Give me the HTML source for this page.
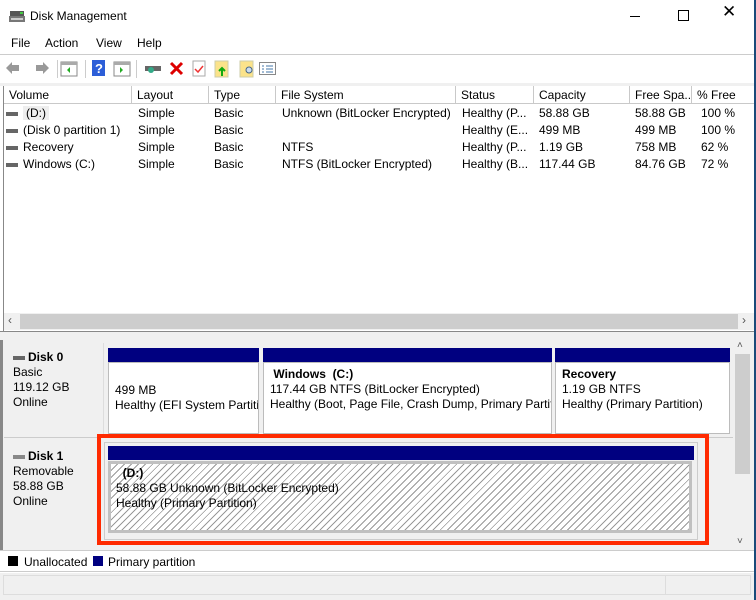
<!DOCTYPE html>
<html><head><style>
*{margin:0;padding:0;box-sizing:border-box}
body{width:756px;height:600px;background:#fff;font-family:"Liberation Sans",sans-serif;font-size:12px;color:#000;position:relative;overflow:hidden}
.a{position:absolute;white-space:nowrap}
.hdr{position:absolute;top:86px;height:18px;background:#fff;border-right:1px solid #c9c9c9;border-bottom:1px solid #c9c9c9;padding:2px 0 0 5px;white-space:nowrap}
.row{position:absolute;left:4px;width:750px;height:17px;line-height:17px;white-space:nowrap}
.row>span{position:absolute;white-space:nowrap}
.dk{display:inline-block;width:12px;height:4px;background:#666;vertical-align:middle;margin-right:5px}
.bar{position:absolute;height:14px;background:#000080}
.box{position:absolute;background:#fff;border:1px solid #bcbcbc;padding:4px 0 0 6px;line-height:15px;overflow:hidden;white-space:nowrap}
.hatch{background:repeating-linear-gradient(135deg,#fff 0 4px,#999 4px 5px)}
</style></head><body>
<svg class="a" style="left:9px;top:9px" width="16" height="14"><rect x="1" y="2" width="14" height="5" fill="#555"/><rect x="0" y="7" width="16" height="6" fill="#777"/><rect x="11" y="3" width="3" height="2" fill="#4c4"/><rect x="2" y="9" width="12" height="2" fill="#ccc"/></svg>
<div class="a" style="left:30px;top:9px;font-size:12px">Disk Management</div>
<div class="a" style="left:630px;top:16px;width:10px;height:1px;background:#000"></div>
<div class="a" style="left:678px;top:10px;width:11px;height:11px;border:1px solid #000"></div>
<div class="a" style="left:722px;top:2px;font-size:17px">✕</div>
<div class="a" style="left:754px;top:0;width:2px;height:600px;background:#1a4b7a"></div>
<div class="a" style="left:11px;top:36px">File</div>
<div class="a" style="left:45px;top:36px">Action</div>
<div class="a" style="left:96px;top:36px">View</div>
<div class="a" style="left:137px;top:36px">Help</div>
<div class="a" style="left:0;top:54px;width:754px;height:1px;background:#ccc"></div>
<div class="a" style="left:0;top:55px;width:754px;height:28px;background:#fff"></div>
<svg class="a" style="left:5px;top:60px" width="260" height="18">
<path d="M1 8 L7 2 V5 H14 V11 H7 V14Z" fill="#999"/>
<path d="M44 8 L38 2 V5 H31 V11 H38 V14Z" fill="#999"/>
<rect x="52" y="0" width="1" height="18" fill="#ccc"/>
<rect x="56" y="2" width="16" height="14" fill="#fff" stroke="#888"/><rect x="56" y="2" width="16" height="3" fill="#aaa"/><path d="M62 10 l3 -3 v6z" fill="#2a2"/>
<rect x="80" y="0" width="1" height="18" fill="#ccc"/>
<rect x="87" y="0" width="13" height="16" fill="#2c5ed8"/><text x="90" y="13" fill="#fff" font-size="13" font-weight="bold">?</text>
<rect x="109" y="2" width="16" height="14" fill="#fff" stroke="#888"/><rect x="109" y="2" width="16" height="3" fill="#aaa"/><path d="M115 7 l3 3 -3 3z" fill="#2a2"/>
<rect x="131" y="0" width="1" height="18" fill="#ccc"/>
<rect x="140" y="6" width="16" height="5" fill="#666"/><circle cx="146" cy="10" r="3" fill="#3a8" />
<path d="M166 3 L177 14 M177 3 L166 14" stroke="#d00" stroke-width="3"/>
<rect x="188" y="1" width="12" height="15" fill="#fff" stroke="#aaa"/><path d="M190 9 l3 3 5 -6" stroke="#e33" fill="none" stroke-width="1.5"/>
<rect x="210" y="1" width="13" height="16" fill="#fbe38a" stroke="#cca"/><path d="M217 8 v8 M214 11 l3 -3 3 3" stroke="#1a1" stroke-width="2" fill="none"/>
<rect x="235" y="1" width="13" height="16" fill="#fbe38a" stroke="#cca"/><circle cx="244" cy="10" r="3" fill="#cde" stroke="#468"/>
</svg>
<svg class="a" style="left:259px;top:62px" width="18" height="14"><rect x="0.5" y="0.5" width="16" height="12" fill="#fff" stroke="#888"/><path d="M3 4h2M7 4h7M3 7h2M7 7h7M3 10h2M7 10h7" stroke="#47a"/></svg>
<div class="a" style="left:0;top:83px;width:754px;height:3px;background:#f0f0f0"></div>
<div class="a" style="left:3px;top:86px;width:751px;height:245px;border-left:1px solid #888"></div>
<div class="hdr" style="left:4px;width:128px">Volume</div>
<div class="hdr" style="left:132px;width:77px">Layout</div>
<div class="hdr" style="left:209px;width:67px">Type</div>
<div class="hdr" style="left:276px;width:180px">File System</div>
<div class="hdr" style="left:456px;width:78px">Status</div>
<div class="hdr" style="left:534px;width:96px">Capacity</div>
<div class="hdr" style="left:630px;width:62px">Free Spa...</div>
<div class="hdr" style="left:692px;width:62px;border-right:none">% Free</div>
<div class="row" style="top:105px"><span style="left:2px"><i class="dk"></i><b style="font-weight:normal;background:#eee;padding:0 3px">(D:)</b></span><span style="left:134px">Simple</span><span style="left:210px">Basic</span><span style="left:278px">Unknown (BitLocker Encrypted)</span><span style="left:458px">Healthy (P...</span><span style="left:535px">58.88 GB</span><span style="left:631px">58.88 GB</span><span style="left:697px">100 %</span></div>
<div class="row" style="top:122px"><span style="left:2px"><i class="dk"></i>(Disk 0 partition 1)</span><span style="left:134px">Simple</span><span style="left:210px">Basic</span><span style="left:458px">Healthy (E...</span><span style="left:535px">499 MB</span><span style="left:631px">499 MB</span><span style="left:697px">100 %</span></div>
<div class="row" style="top:139px"><span style="left:2px"><i class="dk"></i>Recovery</span><span style="left:134px">Simple</span><span style="left:210px">Basic</span><span style="left:278px">NTFS</span><span style="left:458px">Healthy (P...</span><span style="left:535px">1.19 GB</span><span style="left:631px">758 MB</span><span style="left:697px">62 %</span></div>
<div class="row" style="top:156px"><span style="left:2px"><i class="dk"></i>Windows (C:)</span><span style="left:134px">Simple</span><span style="left:210px">Basic</span><span style="left:278px">NTFS (BitLocker Encrypted)</span><span style="left:458px">Healthy (B...</span><span style="left:535px">117.44 GB</span><span style="left:631px">84.76 GB</span><span style="left:697px">72 %</span></div>
<div class="a" style="left:4px;top:313px;width:750px;height:17px;background:#f0f0f0"></div>
<div class="a" style="left:20px;top:314px;width:718px;height:15px;background:#cdcdcd"></div>
<div class="a" style="left:8px;top:313px;color:#555">‹</div>
<div class="a" style="left:742px;top:313px;color:#555">›</div>
<div class="a" style="left:0;top:331px;width:754px;height:9px;background:#f0f0f0;border-top:1px solid #888"></div>
<div class="a" style="left:0;top:340px;width:754px;height:210px;background:#f0f0f0;border-left:3px solid #888"></div>
<div class="a" style="left:4px;top:343px;width:100px;height:94px;background:#f0f0f0;border-right:1px solid #ddd"></div>
<div class="a" style="left:4px;top:437px;width:729px;height:1px;background:#ccc"></div>
<div class="a" style="left:13px;top:350px;line-height:15px"><i class="dk" style="margin-right:3px"></i><b>Disk 0</b><br>Basic<br>119.12 GB<br>Online</div>
<div class="a" style="left:13px;top:449px;line-height:15px"><i class="dk" style="margin-right:3px;background:#888"></i><b>Disk 1</b><br>Removable<br>58.88 GB<br>Online</div>
<div class="bar" style="left:108px;top:348px;width:151px"></div>
<div class="bar" style="left:263px;top:348px;width:289px"></div>
<div class="bar" style="left:555px;top:348px;width:175px"></div>
<div class="box" style="left:108px;top:362px;width:151px;height:72px;padding-top:20px">499 MB<br>Healthy (EFI System Partiti</div>
<div class="box" style="left:263px;top:362px;width:289px;height:72px">&nbsp;<b>Windows&nbsp; (C:)</b><br>117.44 GB NTFS (BitLocker Encrypted)<br>Healthy (Boot, Page File, Crash Dump, Primary Partit</div>
<div class="box" style="left:555px;top:362px;width:175px;height:72px"><b>Recovery</b><br>1.19 GB NTFS<br>Healthy (Primary Partition)</div>
<div class="a" style="left:104px;top:442px;width:594px;height:98px;border:1px solid #ccc"></div>
<div class="bar" style="left:108px;top:446px;width:586px"></div>
<div class="box hatch" style="left:108px;top:461px;width:584px;height:72px;border:3px solid #c0c0c0;padding:2px 0 0 5px">&nbsp;&nbsp;<b>(D:)</b><br>58.88 GB Unknown (BitLocker Encrypted)<br>Healthy (Primary Partition)</div>
<div class="a" style="left:97px;top:434px;width:612px;height:111px;border:4px solid #ff2a00"></div>
<div class="a" style="left:733px;top:342px;width:18px;height:208px;background:#f0f0f0"></div>
<div class="a" style="left:735px;top:354px;width:15px;height:120px;background:#cdcdcd"></div>
<div class="a" style="left:737px;top:340px;color:#555;font-size:10px">˄</div>
<div class="a" style="left:737px;top:536px;color:#555;font-size:10px">˅</div>
<div class="a" style="left:0;top:550px;width:754px;height:22px;background:#fff;border-top:1px solid #ccc;border-bottom:1px solid #ccc"></div>
<div class="a" style="left:8px;top:556px;width:10px;height:10px;background:#000"></div>
<div class="a" style="left:24px;top:555px">Unallocated</div>
<div class="a" style="left:93px;top:556px;width:10px;height:10px;background:#000080"></div>
<div class="a" style="left:108px;top:555px">Primary partition</div>
<div class="a" style="left:0;top:573px;width:754px;height:27px;background:#f0f0f0"></div>
<div class="a" style="left:3px;top:575px;width:748px;height:20px;border:1px solid #ddd"></div>
<div class="a" style="left:665px;top:576px;width:1px;height:19px;background:#ddd"></div>
</body></html>
